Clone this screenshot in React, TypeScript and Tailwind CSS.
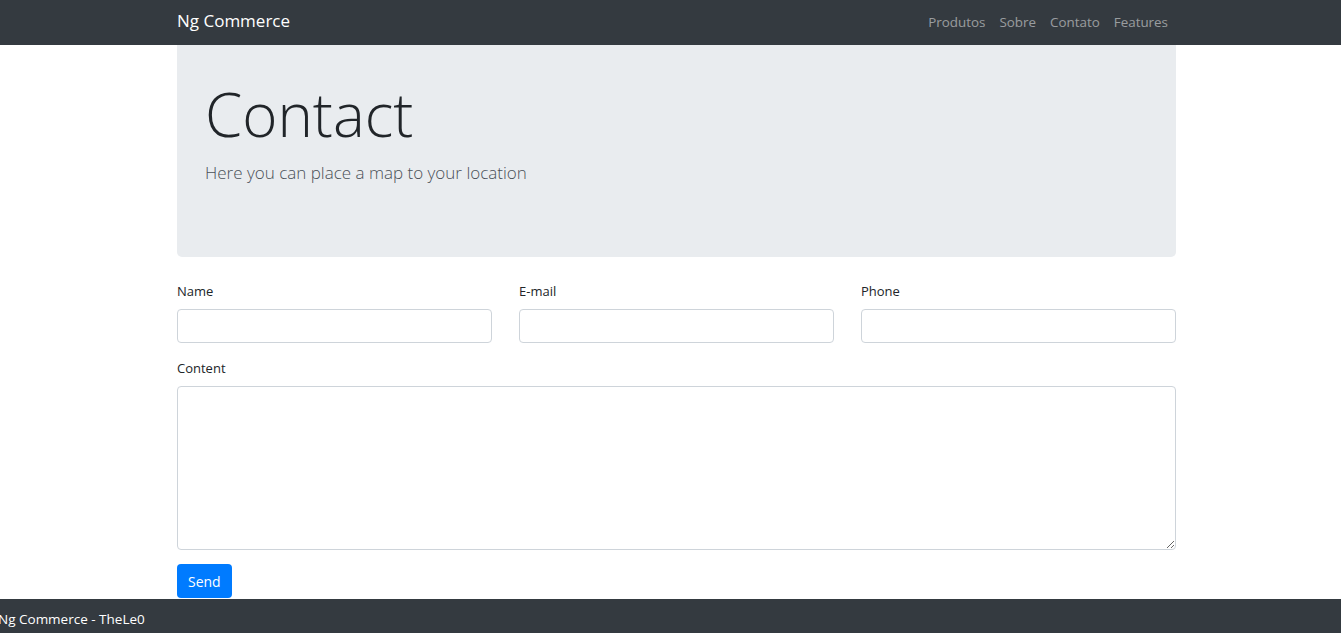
export default function App() {
  return (
    <div className="min-h-screen bg-white font-['Open_Sans','Noto_Sans',sans-serif] text-[#212529]">
      <nav className="h-[45px] bg-[#343a40]">
        <div className="ml-[177px] flex h-full w-[999px] items-center justify-between pb-[4px]">
          <a href="#" className="text-[17px] text-white">
            Ng Commerce
          </a>
          <ul className="flex items-center pr-[1px]">
            {["Produtos", "Sobre", "Contato", "Features"].map((item) => (
              <li key={item}>
                <a href="#" className="px-[7px] text-[13.4px] text-white/50">
                  {item}
                </a>
              </li>
            ))}
          </ul>
        </div>
      </nav>

      <main className="ml-[177px] w-[999px]">
        <div className="h-[212px] rounded-b-[5px] bg-[#e9ecef] px-[28px] pt-[33px]">
          <h1 className="text-[60px] font-light leading-[72px] text-[#212529]">Contact</h1>
          <p className="mt-[9px] text-[17px] font-light leading-[28px] text-[#495057]">
            Here you can place a map to your location
          </p>
        </div>

        <form className="mt-[24px] text-[13px]">
          <div className="grid grid-cols-3 gap-[27px]">
            {["Name", "E-mail", "Phone"].map((label) => (
              <div key={label}>
                <label className="mb-[8px] block leading-[20px]">{label}</label>
                <input className="block h-[34px] w-full rounded-[4px] border border-[#ced4da] px-3" />
              </div>
            ))}
          </div>

          <div className="mt-[15px]">
            <label className="mb-[8px] block leading-[20px]">Content</label>
            <textarea className="block h-[164px] w-full rounded-[4px] border border-[#ced4da] px-3 py-2" />
          </div>

          <button
            type="button"
            className="mt-[14px] h-[34px] rounded-[4px] bg-[#007bff] px-[11px] text-[14px] text-white"
          >
            Send
          </button>
        </form>
      </main>

      <footer className="mt-px flex h-[34px] items-center bg-[#343a40] pt-[6px]">
        <span className="-ml-0.5 text-[13.5px] text-white">Ng Commerce - TheLe0</span>
      </footer>
    </div>
  );
}
